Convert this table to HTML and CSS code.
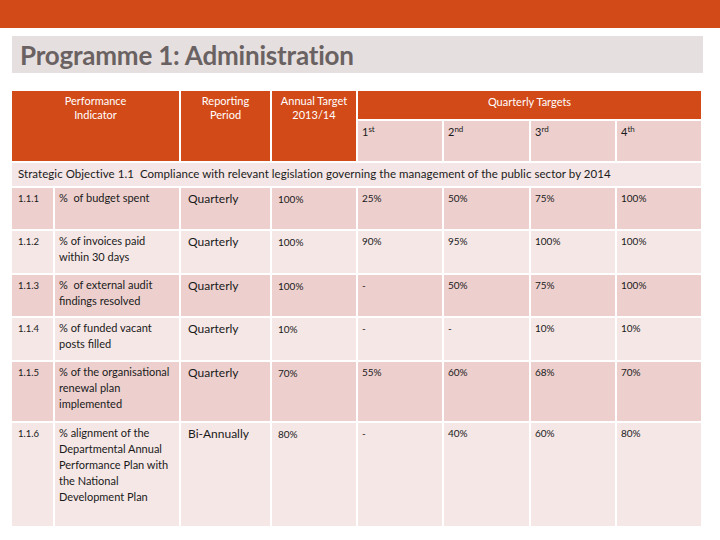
FILE: index.html
```html
<!DOCTYPE html>
<html>
<head>
<meta charset="utf-8">
<link rel="stylesheet" href="styles.css">
</head>
<body>
<div class="topbar"></div>
<div class="title"><h1>Programme 1: Administration</h1></div>
<div class="table">
  <div class="h hpi">Performance<br>Indicator</div>
  <div class="h hrp">Reporting<br>Period</div>
  <div class="h hat">Annual Target<br>2013/14</div>
  <div class="h hqt">Quarterly Targets</div>
  <div class="sub">1<sup>st</sup></div>
  <div class="sub">2<sup>nd</sup></div>
  <div class="sub">3<sup>rd</sup></div>
  <div class="sub">4<sup>th</sup></div>
  <div class="strat">Strategic Objective 1.1&nbsp; Compliance with relevant legislation governing the management of the public sector by 2014</div>

  <div class="c dk num">1.1.1</div><div class="c dk ind">%&nbsp; of budget spent</div><div class="c dk per">Quarterly</div><div class="c dk an">100%</div><div class="c dk q">25%</div><div class="c dk q">50%</div><div class="c dk q">75%</div><div class="c dk q">100%</div>

  <div class="c lt num">1.1.2</div><div class="c lt ind">% of invoices paid within 30 days</div><div class="c lt per">Quarterly</div><div class="c lt an">100%</div><div class="c lt q">90%</div><div class="c lt q">95%</div><div class="c lt q">100%</div><div class="c lt q">100%</div>

  <div class="c dk num">1.1.3</div><div class="c dk ind">%&nbsp; of external audit findings resolved</div><div class="c dk per">Quarterly</div><div class="c dk an">100%</div><div class="c dk q">-</div><div class="c dk q">50%</div><div class="c dk q">75%</div><div class="c dk q">100%</div>

  <div class="c lt num">1.1.4</div><div class="c lt ind">% of funded vacant posts filled</div><div class="c lt per">Quarterly</div><div class="c lt an">10%</div><div class="c lt q">-</div><div class="c lt q">-</div><div class="c lt q">10%</div><div class="c lt q">10%</div>

  <div class="c dk num">1.1.5</div><div class="c dk ind">% of the organisational renewal plan implemented</div><div class="c dk per">Quarterly</div><div class="c dk an">70%</div><div class="c dk q">55%</div><div class="c dk q">60%</div><div class="c dk q">68%</div><div class="c dk q">70%</div>

  <div class="c lt num">1.1.6</div><div class="c lt ind">% alignment of the Departmental Annual Performance Plan with the National Development Plan</div><div class="c lt per">Bi-Annually</div><div class="c lt an">80%</div><div class="c lt q">-</div><div class="c lt q">40%</div><div class="c lt q">60%</div><div class="c lt q">80%</div>
</div>
</body>
</html>
```

FILE: styles.css
```css
html, body {
  margin: 0;
  padding: 0;
  background: #ffffff;
}
body {
  width: 720px;
  height: 540px;
  overflow: hidden;
  font-family: Lato, "Open Sans", sans-serif;
  color: #1a1a1a;
}
.topbar {
  height: 28px;
  background: #d24a18;
}
.title {
  margin: 8px 17px 0 12px;
  height: 37px;
  background: #e6dfdf;
  display: flex;
  align-items: center;
}
.title h1 {
  margin: 0 0 0 8px;
  font-family: Lato, sans-serif;
  font-weight: 700;
  font-size: 26px;
  letter-spacing: -0.2px;
  color: #6a6262;
}
.table {
  margin: 18px 0 0 12px;
  width: 689px;
  display: grid;
  grid-template-columns: 41px 124px 89px 84px 84px 85px 84px 84px;
  grid-template-rows: 28px 40px 23px 41px 42px 41px 42px 59px 103px;
  gap: 2px;
  font-size: 11px;
  line-height: 16px;
}
.h {
  background: #d24a18;
  color: #ffffff;
  text-align: center;
  line-height: 14px;
  padding-top: 3px;
}
.hpi { grid-column: 1 / 3; grid-row: 1 / 3; }
.hrp { grid-column: 3; grid-row: 1 / 3; }
.hat { grid-column: 4; grid-row: 1 / 3; }
.hqt { grid-column: 5 / 9; grid-row: 1; padding-top: 4px; }
.sub {
  background: #edd0ce;
  padding: 3px 4px 0;
  font-size: 11px;
}
.sub sup {
  font-size: 8px;
  vertical-align: 4px;
  line-height: 0;
}
.strat {
  grid-column: 1 / 9;
  background: #f4e6e6;
  padding: 3px 6px 0;
  font-size: 11.5px;
  letter-spacing: 0.05px;
}
.c { padding-top: 2px; }
.dk { background: #edd0ce; }
.lt { background: #f5e7e6; }
.num { font-size: 9.5px; padding-left: 6px; padding-top: 3px; }
.ind { padding-left: 4px; padding-right: 2px; }
.per { padding-left: 7px; font-size: 12px; padding-top: 3px; }
.an { padding-left: 6px; font-size: 10px; padding-top: 3px; }
.q { padding-left: 4px; font-size: 10px; }
```
